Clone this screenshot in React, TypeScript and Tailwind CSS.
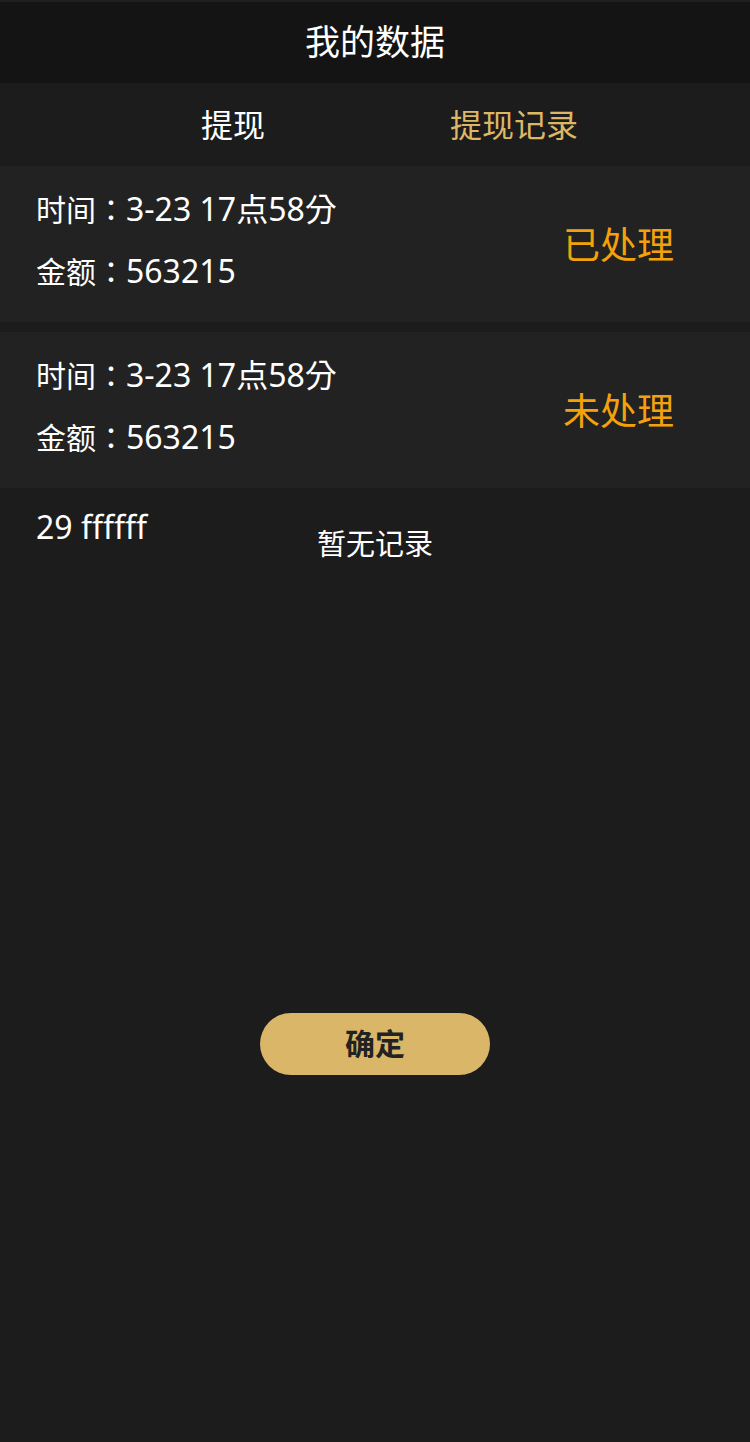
import React from 'react';

const records = [
  { time: '3-23 17点58分', amount: '563215', status: '已处理' },
  { time: '3-23 17点58分', amount: '563215', status: '未处理' },
];

export default function App() {
  return (
    <div
      className="w-[750px] min-h-[1442px] bg-[#1c1c1c] text-white flex flex-col"
      style={{ fontFamily: '"Noto Sans", "Noto Sans CJK SC", sans-serif' }}
    >
      <div className="h-[2px] bg-[#1f1f1f]" />
      {/* Header */}
      <div className="h-[81px] bg-[#141414] flex items-center justify-center">
        <h1 className="text-[35px] leading-none -mt-[2px]">我的数据</h1>
      </div>

      {/* Tabs */}
      <div className="h-[83px] bg-[#1c1c1c] flex items-center">
        <div className="w-[466px] flex justify-center">
          <span className="text-[32px] leading-none">提现</span>
        </div>
        <div className="w-[96px] flex justify-center">
          <span className="text-[32px] leading-none text-[#dcb866] whitespace-nowrap">提现记录</span>
        </div>
      </div>

      {/* Records */}
      <div className="flex flex-col gap-[10px]">
        {records.map((r, idx) => (
          <div key={idx} className="h-[156px] bg-[#222222] flex items-center justify-between pl-[36px] pr-[76px]">
            <div
              className="flex flex-col gap-[26px] -mt-[8px]"
              style={{ fontFamily: '"Noto Sans", "Noto Sans CJK TC", sans-serif' }}
            >
              <p className="text-[30px] leading-[35px] whitespace-nowrap">
                时间：<span className="text-[32px]">{r.time}</span>
              </p>
              <p className="text-[30px] leading-[35px] whitespace-nowrap">
                金额：<span className="text-[32px]">{r.amount}</span>
              </p>
            </div>
            <p className="text-[37px] leading-none text-[#f5a10c]">{r.status}</p>
          </div>
        ))}
      </div>

      {/* Empty area */}
      <div className="relative h-[80px]">
        <p className="absolute left-[36px] top-[23px] text-[32px] leading-none">29 ffffff</p>
        <p className="absolute left-0 right-0 top-[41px] text-center text-[29px] leading-none">暂无记录</p>
      </div>

      <div className="flex justify-center mt-[445px]">
        <button className="w-[230px] h-[62px] rounded-full bg-[#dab768] text-[#222222] text-[30px] font-bold leading-none">
          确定
        </button>
      </div>
    </div>
  );
}
